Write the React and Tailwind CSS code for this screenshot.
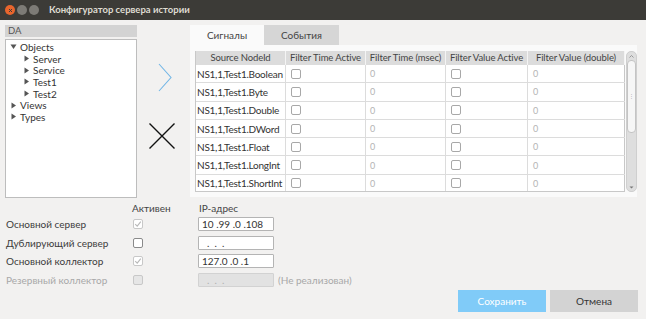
import React from 'react'

const treeItems = [
  { label: 'Objects', level: 0, open: true },
  { label: 'Server', level: 1 },
  { label: 'Service', level: 1 },
  { label: 'Test1', level: 1 },
  { label: 'Test2', level: 1 },
  { label: 'Views', level: 0 },
  { label: 'Types', level: 0 },
]

const rows = ['Boolean', 'Byte', 'Double', 'DWord', 'Float', 'LongInt', 'ShortInt']

const cols = [
  { title: 'Source NodeId', w: 'w-[90px]' },
  { title: 'Filter Time Active', w: 'w-[80px]' },
  { title: 'Filter Time (msec)', w: 'w-[80px]' },
  { title: 'Filter Value Active', w: 'w-[82px]' },
  { title: 'Filter Value (double)', w: 'w-[97px]' },
]

function Arrow({ open }) {
  return (
    <svg width="7" height="7" viewBox="0 0 7 7" className="shrink-0">
      {open ? <path d="M0.5 1.5 L6.5 1.5 L3.5 6 Z" fill="#555" /> : <path d="M1.5 0.5 L6 3.5 L1.5 6.5 Z" fill="#555" />}
    </svg>
  )
}

function Check({ checked, disabled, filled }) {
  const border = disabled ? 'border-[#c8c8c8]' : 'border-[#8a8a8a]'
  const bg = filled ? 'bg-[#e6e6e6]' : 'bg-white'
  return (
    <span className={`flex items-center justify-center w-[10px] h-[10px] border rounded-[2px] ${border} ${bg}`}>
      {checked && (
        <svg width="8" height="8" viewBox="0 0 8 8">
          <path d="M1.2 4.2 L3.2 6.2 L6.8 1.6" fill="none" stroke="#b8b8b8" strokeWidth="1.1" />
        </svg>
      )}
    </span>
  )
}

function TableCheck() {
  return <span className="block w-[10px] h-[10px] border border-[#a8a8a8] rounded-[2px] bg-white" />
}

const formRows = [
  { label: 'Основной сервер', checked: true, disabled: true, ip: '10 .99 .0 .108' },
  { label: 'Дублирующий сервер', checked: false, disabled: false, ip: '  .  .  .' },
  { label: 'Основной коллектор', checked: true, disabled: true, ip: '127.0 .0 .1' },
  { label: 'Резервный коллектор', checked: false, disabled: true, filled: true, ip: '  .  .  .', off: true },
]

export default function App() {
  return (
    <div className="w-[646px] h-[319px] flex flex-col bg-[#f2f1f0] text-[#3c3c3c] text-[10px] leading-none overflow-hidden" style={{ fontFamily: 'Lato, "Noto Sans", sans-serif' }}>
      {/* Title bar */}
      <div className="h-[20px] shrink-0 flex items-center bg-[#3c3b37] pl-[5px]">
        <div className="flex items-center gap-[1px]">
          <span className="flex items-center justify-center w-[10px] h-[10px] rounded-full bg-[#e8652d]">
            <svg width="5" height="5" viewBox="0 0 5 5">
              <path d="M1 1 L4 4 M4 1 L1 4" stroke="#3c3b37" strokeWidth="1" />
            </svg>
          </span>
          <span className="w-[10px] h-[10px] rounded-full bg-[#7d7b76] ml-[1px]" />
          <span className="w-[10px] h-[10px] rounded-full bg-[#7d7b76] ml-[1px]" />
        </div>
        <span className="ml-[10px] font-bold text-[9.5px] text-[#dfdbd2]">Конфигуратор сервера истории</span>
      </div>

      {/* Main area */}
      <div className="flex pt-[5px] pl-[5px] h-[178px] shrink-0">
        {/* Left tree */}
        <div className="w-[132px] flex flex-col">
          <div className="h-[12px] bg-[#d3d3d3] pl-[3px] flex items-center text-[9.5px] text-[#555]">DA</div>
          <div className="mt-[2px] flex-1 bg-white border border-[#bdbdbd] pt-[1px]">
            {treeItems.map((it) => (
              <div
                key={it.label}
                className={`h-[11.7px] flex items-center gap-[3px] ${it.level ? 'pl-[17px]' : 'pl-[4px]'}`}
              >
                <Arrow open={it.open} />
                <span className="text-[10px] text-[#333]">{it.label}</span>
              </div>
            ))}
          </div>
        </div>

        {/* Middle arrows */}
        <div className="w-[53px] flex flex-col items-center pt-[38px]">
          <svg width="16" height="30" viewBox="0 0 16 30" className="ml-[2px]">
            <path d="M2 1 L14 14.5 L2 28" fill="none" stroke="#72b6e6" strokeWidth="1.1" />
          </svg>
          <svg width="28" height="28" viewBox="0 0 28 28" className="mt-[29px] -ml-[4px]">
            <path d="M1.5 1.5 L26.5 26.5 M26.5 1.5 L1.5 26.5" stroke="#111" strokeWidth="1.4" />
          </svg>
        </div>

        {/* Right tabs */}
        <div className="w-[447px] flex flex-col">
          <div className="flex h-[20px]">
            <div className="w-[74px] bg-[#fafafa] flex items-center justify-center text-[#444]">Сигналы</div>
            <div className="w-[75px] bg-[#d6d6d6] flex items-center justify-center text-[#444]">События</div>
          </div>
          <div className="h-[152px] bg-[#fafafa] pl-[5px] pt-[6px] flex">
            <div className="flex flex-col border-l border-b border-[#c8c8c8] h-[141px] overflow-hidden">
              <div className="flex h-[14px] bg-[#dcdcdc] shrink-0">
                {cols.map((c) => (
                  <div key={c.title} className={`${c.w} border-r border-[#f4f4f4] flex items-center justify-center text-[9.5px] tracking-[-0.1px] text-[#444] whitespace-nowrap`}>
                    {c.title}
                  </div>
                ))}
              </div>
              {rows.map((r) => (
                <div key={r} className="flex h-[18.3px] shrink-0 border-b border-[#dcdcdc] bg-white">
                  <div className="w-[90px] border-r border-[#dcdcdc] flex items-center pl-[1px] text-[#333] tracking-[-0.25px] whitespace-nowrap">NS1,1,Test1.{r}</div>
                  <div className="w-[80px] border-r border-[#dcdcdc] flex items-center pl-[5px]"><TableCheck /></div>
                  <div className="w-[80px] border-r border-[#dcdcdc] flex items-center pl-[4px] text-[9px] text-[#b4b4b4]">0</div>
                  <div className="w-[82px] border-r border-[#dcdcdc] flex items-center pl-[5px]"><TableCheck /></div>
                  <div className="w-[97px] border-r border-[#c8c8c8] flex items-center pl-[5px] text-[9px] text-[#b4b4b4]">0</div>
                </div>
              ))}
            </div>
            {/* Scrollbar */}
            <div className="w-[11px] h-[141px] ml-[1px] flex flex-col items-center bg-[#dedede] rounded-[5px] border border-[#cfcfcf]">
              <div className="h-[8px] w-full flex items-center justify-center">
                <svg width="5" height="3" viewBox="0 0 5 3"><path d="M0.5 2.5 L2.5 0.5 L4.5 2.5" fill="none" stroke="#888" strokeWidth="0.8" /></svg>
              </div>
              <div className="w-[9px] h-[73px] bg-[#f6f6f6] rounded-[4px] border border-[#c4c4c4] flex items-center justify-center">
                <span className="text-[5px] leading-none text-[#aaa]">⋮</span>
              </div>
              <div className="flex-1" />
              <div className="h-[8px] w-full flex items-center justify-center">
                <svg width="5" height="3" viewBox="0 0 5 3"><path d="M0.5 0.5 L4.5 0.5 L2.5 2.5 Z" fill="#777" /></svg>
              </div>
            </div>
          </div>
        </div>
      </div>

      {/* Bottom form */}
      <div className="flex-1 flex flex-col pl-[6px] pt-[3px]">
        <div className="flex h-[14px] items-center">
          <div className="w-[126px]" />
          <div className="w-[66px] text-[#444]">Активен</div>
          <div className="pl-[1px] text-[#444]">IP-адрес</div>
        </div>
        {formRows.map((f) => (
          <div key={f.label} className="flex h-[18.6px] items-center">
            <div className={`w-[127px] ${f.off ? 'text-[#a8a8a8]' : 'text-[#3c3c3c]'}`}>{f.label}</div>
            <div className="w-[65px]">
              <Check checked={f.checked} disabled={f.disabled} filled={f.filled} />
            </div>
            <div
              className={`w-[76px] h-[14px] border rounded-[1px] flex items-center pl-[3px] whitespace-pre ${
                f.off ? 'bg-[#e2e2e2] border-[#d2d2d2] text-[#b0b0b0]' : 'bg-white border-[#b4b4b4] text-[#333]'
              }`}
            >
              {f.ip}
            </div>
            {f.off && <span className="ml-[4px] text-[#a8a8a8]">(Не реализован)</span>}
          </div>
        ))}
        <div className="flex justify-end gap-[4px] pr-[8px] mt-[1px]">
          <button className="w-[88px] h-[22px] bg-[#80cbf8] text-white">Сохранить</button>
          <button className="w-[88px] h-[22px] bg-[#d3d3d3] text-[#333]">Отмена</button>
        </div>
      </div>
    </div>
  )
}
